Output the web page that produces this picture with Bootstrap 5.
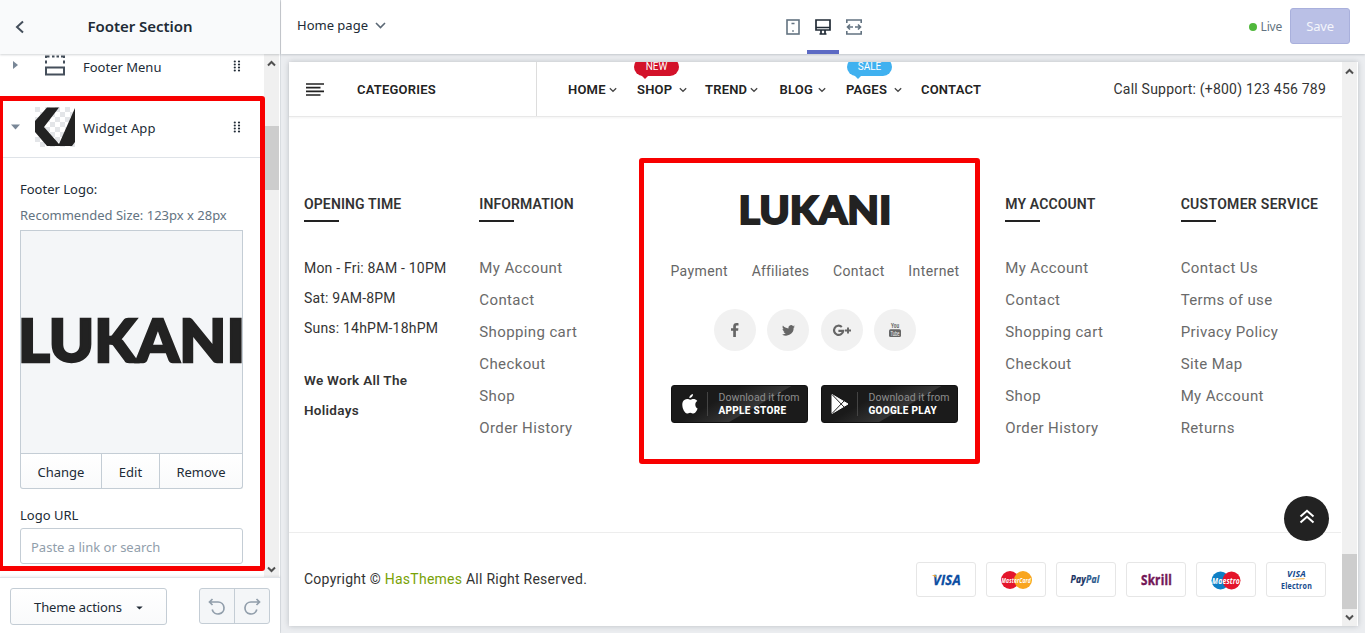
<!DOCTYPE html>
<html lang="en">
<head>
<meta charset="utf-8">
<meta name="viewport" content="width=device-width, initial-scale=1">
<title>Footer Section</title>
<link href="https://cdn.jsdelivr.net/npm/bootstrap@5.3.0/dist/css/bootstrap.min.css" rel="stylesheet">
<style>
body{height:633px;overflow:hidden;background:#ebedf0;font:13px/20px "Noto Sans","Open Sans",sans-serif;color:#212b36}
svg{display:block;flex:none;overflow:visible}
.app{height:633px}
.side{width:281px;border-right:1px solid #d9dde1;background:#fff}
.side-head{height:54px;background:#f9fafb;box-shadow:0 1px 2px rgba(33,43,54,.2);padding-left:15px;z-index:2}
.side-title{font-size:15px;font-weight:600;letter-spacing:-.03px;width:210px;padding:0 0 2px 4px}
.side-body{height:523px}
.side-scroll{width:264px}
.sbar{width:15px;background:#f0f0f0;height:100%}
.sbar .thumb{background:#cdcdcd}
.row-item{height:61px;padding-left:11px}
.row-item.first{margin-top:-18px}
.row-item.active-row{border-bottom:1px solid #dfe3e8}
.row-item .tri{width:24px}
.row-item .thumbbox{width:40px;height:40px;margin-right:8px}
.row-item .label{width:150px}
.active-row .label{padding-top:2px;letter-spacing:.15px}
.fields{padding:21px 21px 0 20px}
.hint{color:#637381;margin:6px 0 5px}
.imgbox{height:224px;border:1px solid #c4cdd5;background:#f4f6f8}
.imgbtns{height:35px;border:1px solid #c4cdd5;border-top:0;border-radius:0 0 3px 3px;background:linear-gradient(#fff,#f9fafb)}
.imgbtns span{border-right:1px solid #c4cdd5;text-align:center;line-height:36px}
.imgbtns span:last-child{border:0}
.field{height:36px;border:1px solid #c4cdd5;border-radius:3px;color:#919eab;padding:9px 10px;line-height:19px}
.side-foot{height:56px;border-top:1px solid #dfe3e8;box-shadow:0 -1px 2px rgba(33,43,54,.08);padding:10px 10px 0;background:#fff}
.tbtn{width:157px;height:37px;border:1px solid #c4cdd5;border-radius:3px;background:linear-gradient(#fff,#f9fafb);padding-left:23px;letter-spacing:-.1px}
.ugroup{width:71px;height:36px;border:1px solid #c4cdd5;border-radius:3px;background:#f4f6f8}
.ugroup div{width:34px}
.ugroup div+div{border-left:1px solid #c4cdd5;width:35px}
.hl{position:absolute;border:5px solid #f80000;border-radius:3px;z-index:5;pointer-events:none}
.hl-side{left:-2px;top:96px;width:267px;height:475px}
.hl-mid{left:350px;top:96px;width:341px;height:306px}
.topbar{height:54px;background:#fff;box-shadow:0 1px 2px rgba(33,43,54,.2);padding:0 15px 0 16px;z-index:1}
.modes{gap:15px}
.modes>div{height:54px}
.modes .on{border-bottom:4px solid #5c6ac4;width:32px;padding-top:4px}
.live{color:#637381;font-size:12px;letter-spacing:-.2px}
.dot{width:8px;height:8px;border-radius:50%;background:#50b83c}
.save{width:60px;height:36px;border:1px solid #a9b0dc;border-radius:3px;background:#bac0e6;color:#f4f5fb}
.frame{margin:8px 7px 7px 8px;height:564px;width:1069px;background:#fff;box-shadow:0 0 5px rgba(60,70,80,.28);color:#333;font-family:Roboto,"Liberation Sans",sans-serif}
.page{width:1053px}
.nav-strip{height:55px;border-bottom:1px solid #e8e8e8;box-shadow:0 1px 2px rgba(0,0,0,.05);font-weight:600;color:#222;letter-spacing:.2px}
.cats{width:248px;border-right:1px solid #ddd;padding-left:17px;gap:33px;padding-top:1px}
.menu{display:grid;grid-template-columns:69px 68px 74.5px 66.5px 75px 80px;flex:1;overflow:hidden;padding:0 0 0 3px;margin-left:28px}
.menu>div{gap:3px;padding-top:1px}
.menu .wide{gap:7px}
.flag{position:absolute;left:-3px;top:-4px;width:45px;height:18px;border-radius:9px;color:#fff;font-size:10px;font-weight:400;line-height:18px;text-align:center;letter-spacing:0}
.flag::after{content:"";position:absolute;left:7px;top:17px;border:4px solid transparent;border-top-color:inherit;border-bottom:0}
.flag.new{background:#d3122a;border-color:#d3122a}
.flag.sale{background:#40b1f0;border-color:#40b1f0}
.call{font-size:14px;font-weight:400;letter-spacing:.21px;padding-right:16px;color:#333}
.cols{height:416px;border-bottom:1px solid #ededed;padding-top:77px;--bs-gutter-x:30px;margin:0;width:1052px}
.ftitle{font-size:14px;font-weight:600;line-height:20px;letter-spacing:.12px;color:#333;margin:0;white-space:nowrap}
.ftitle.svc{letter-spacing:.3px}
.ftitle::after{content:"";display:block;width:35px;height:2px;background:#222;margin-top:6px}
.hours{font-size:14px;line-height:30px;letter-spacing:.2px;color:#333;margin-top:31px}
.hours p{margin:0 0 22px}
.hours b{font-size:13.5px;letter-spacing:.28px;font-weight:600}
.flinks{font-size:15px;line-height:32px;letter-spacing:.38px;color:#6a6a6a;margin-top:30px}
.brand{height:32px}
.mid-links{font-size:14px;letter-spacing:.4px;color:#666;gap:23.7px;margin-top:35px;white-space:nowrap}
.soc{gap:11.4px;margin-top:28px}
.soc div{width:42px;height:42px;border-radius:50%;background:#f1f1f1}
.stores{gap:13px;margin:34px 0 0}
.store{width:137px;height:38px;border-radius:3px;color:#fff;background:linear-gradient(150deg,#1a1a1a 0 35%,#363636 60%,#1b1b1b 61%);line-height:13px;border:1px solid #111}
.store .ic{width:36px;height:24px;border-right:1px solid #444;margin-right:10px}
.store small{display:block;font-size:10.5px;color:#8d8d8d;letter-spacing:.05px}
.store strong{display:block;font-size:10px;letter-spacing:.3px;font-weight:800}
.bottom{height:92px;padding:0 16px 0 15px;font-size:14px;letter-spacing:.25px}
.bottom a{color:#79a206;text-decoration:none}
.pay{width:60px;height:35px;border:1px solid #e6e6e6;border-radius:3px}
.totop{position:absolute;right:29px;top:434px;width:45px;height:45px;border-radius:50%;background:#222}
</style>
</head>
<body>
<svg width="0" height="0" class="position-absolute">
  <defs>
    <symbol id="dots" viewBox="0 0 8 12"><g fill="#212b36"><circle cx="1.800" cy="1.500" r="1.100"/><circle cx="6" cy="1.500" r="1.100"/><circle cx="1.800" cy="4.500" r="1.100"/><circle cx="6" cy="4.500" r="1.100"/><circle cx="1.800" cy="7.500" r="1.100"/><circle cx="6" cy="7.500" r="1.100"/><circle cx="1.800" cy="10.500" r="1.100"/><circle cx="6" cy="10.500" r="1.100"/></g></symbol>
    <symbol id="caret" viewBox="0 0 8 6"><path d="M.8 1.200L4 4.300l3.200-3.100" fill="none" stroke="#444" stroke-width="1.200"/></symbol>
    <symbol id="up" viewBox="0 0 9 7"><path d="M1 5.500l3.500-3.500L8 5.500" fill="none" stroke="#505050" stroke-width="2"/></symbol>
    <symbol id="down" viewBox="0 0 9 7"><path d="M1 1.500L4.500 5 8 1.500" fill="none" stroke="#505050" stroke-width="2"/></symbol>
  </defs>
</svg>
<div class="app d-flex position-relative">
  <aside class="side d-flex flex-column flex-shrink-0">
    <header class="side-head d-flex align-items-center position-relative">
      <svg width="10" height="14" viewBox="0 0 10 14"><path d="M8 1.500L2 7l6 5.500" fill="none" stroke="#454f5b" stroke-width="2"/></svg>
      <div class="side-title text-center ms-2">Footer Section</div>
    </header>
    <div class="side-body d-flex overflow-hidden">
      <div class="side-scroll overflow-hidden">
        <div class="row-item first d-flex align-items-center">
          <div class="tri"><svg width="8" height="10" viewBox="0 0 8 10" style="margin-top:-3px"><path d="M2 1l5 4-5 4z" fill="#798797"/></svg></div>
          <div class="thumbbox d-flex align-items-center justify-content-center"><svg width="20" height="22" viewBox="0 0 20 22" style="margin-top:-3px"><path d="M1 4V2.500h3.500M7 2.500h2.500M11.500 2.500H14M16 2.500h3V4M1 6.500v3M19 6.500v3" fill="none" stroke="#454f5b" stroke-width="2"/><rect x="1" y="13.500" width="18" height="7" fill="none" stroke="#454f5b" stroke-width="2"/></svg></div>
          <div class="label">Footer Menu</div>
          <svg width="8" height="12" style="margin-top:-2px"><use href="#dots"/></svg>
        </div>
        <div class="row-item active-row d-flex align-items-center">
          <div class="tri"><svg width="9" height="6" viewBox="0 0 9 6"><path d="M0 .5h9L4.500 5.500z" fill="#798797"/></svg></div>
          <div class="thumbbox"><svg width="40" height="40" viewBox="0 0 40 40"><defs><pattern id="chk" width="10" height="10" patternUnits="userSpaceOnUse"><rect width="10" height="10" fill="#fff"/><path d="M0 0h5v5H0zM5 5h5v5H5z" fill="#e3e5e8"/></pattern></defs><rect width="40" height="40" fill="url(#chk)"/><path d="M12 .5h12L9 20l15 17L40 1v34l-3 4H12L0 25V14z" fill="#222"/></svg></div>
          <div class="label">Widget App</div>
          <svg width="8" height="12"><use href="#dots"/></svg>
        </div>
        <div class="fields">
          <div>Footer Logo:</div>
          <div class="hint">Recommended Size: 123px x 28px</div>
          <div class="imgbox d-flex align-items-center"><svg width="221" height="50" viewBox="0 0 221 50"><text x="-3" y="45" font-family="Lato" font-weight="900" font-size="58.500" textLength="227" lengthAdjust="spacingAndGlyphs" fill="#222" stroke="#222" stroke-width="2.400">LUKANI</text></svg></div>
          <div class="imgbtns d-flex"><span style="width:81px">Change</span><span style="width:58px">Edit</span><span class="flex-fill">Remove</span></div>
          <div style="margin:16px 0 3px">Logo URL</div>
          <div class="field">Paste a link or search</div>
        </div>
      </div>
      <div class="sbar d-flex flex-column align-items-center">
        <svg style="margin-top:5px" width="9" height="9"><use href="#up" width="9" height="9"/></svg>
        <div class="thumb w-100" style="margin-top:58px;height:64px"></div>
        <svg class="mt-auto mb-1" width="9" height="7"><use href="#down"/></svg>
      </div>
    </div>
    <footer class="side-foot d-flex justify-content-between">
      <div class="tbtn d-flex align-items-center">Theme actions<svg style="margin:3px 0 0 14px" width="7" height="4" viewBox="0 0 8 5"><path d="M0 .5h8L4 4.500z" fill="#212b36"/></svg></div>
      <div class="ugroup d-flex">
        <div class="d-flex align-items-center justify-content-center"><svg width="18" height="18" viewBox="0 0 18 18" style="margin-top:2px"><path d="M1.500 4H10a6 6 0 1 1-5.800 7.500M4.500 1L1.500 4l3 3" fill="none" stroke="#919eab" stroke-width="1.700"/></svg></div>
        <div class="d-flex align-items-center justify-content-center"><svg width="18" height="18" viewBox="0 0 18 18" style="margin-top:2px"><path d="M16.500 4H8a6 6 0 1 0 5.800 7.500M13.500 1l3 3-3 3" fill="none" stroke="#919eab" stroke-width="1.700"/></svg></div>
      </div>
    </footer>
  </aside>

  <main class="flex-grow-1 d-flex flex-column">
    <header class="topbar d-flex align-items-center justify-content-between position-relative">
      <div class="d-flex align-items-center pb-1" style="width:200px">Home page<svg style="margin-left:7px" width="11" height="7" viewBox="0 0 11 7"><path d="M1 1l4.500 4.500L10 1" fill="none" stroke="#5b6875" stroke-width="1.600"/></svg></div>
      <div class="modes d-flex ms-auto" style="margin-right:387px">
        <div class="d-flex align-items-center"><svg width="14" height="16" viewBox="0 0 14 16"><rect x="1" y="1" width="12" height="14" fill="none" stroke="#637381" stroke-width="1.600"/><path d="M5.500 4.500h3M6.200 12h1.600" stroke="#637381" stroke-width="1.400"/></svg></div>
        <div class="on d-flex align-items-center justify-content-center" style="margin:0 -8px"><svg width="16" height="16" viewBox="0 0 16 16"><path d="M1 1h14v10H1zM1 8.500h14M6 11v3.500M10 11v3.500M4.500 15h7" fill="none" stroke="#212b36" stroke-width="1.700"/></svg></div>
        <div class="d-flex align-items-center"><svg width="16" height="16" viewBox="0 0 16 16"><path d="M.8 4V1h14.400v3M.8 12v3h14.400v-3M7 8H1.500M9 8h5.500M4 5.500L1.500 8 4 10.500M12 5.500L14.500 8 12 10.500" fill="none" stroke="#637381" stroke-width="1.600"/></svg></div>
      </div>
      <div class="d-flex align-items-center live"><span class="dot me-1"></span>Live<div class="save d-flex align-items-center justify-content-center" style="font-size:13px;margin:-2px 0 0 8px">Save</div></div>
    </header>

    <div class="frame d-flex position-relative">
      <div class="page">
        <div class="nav-strip d-flex">
          <div class="cats d-flex align-items-center"><svg width="18" height="13" viewBox="0 0 18 13"><path d="M0 1h18M0 4.600h14.500M0 8.300h18M0 12h14.500" stroke="#222" stroke-width="1.700"/></svg>CATEGORIES</div>
          <div class="menu">
            <div class="d-flex align-items-center">HOME<svg width="8" height="6"><use href="#caret"/></svg></div>
            <div class="wide d-flex align-items-center position-relative"><span class="flag new">NEW</span>SHOP<svg width="8" height="6"><use href="#caret"/></svg></div>
            <div class="d-flex align-items-center">TREND<svg width="8" height="6"><use href="#caret"/></svg></div>
            <div class="d-flex align-items-center" style="gap:5px">BLOG<svg width="8" height="6"><use href="#caret"/></svg></div>
            <div class="wide d-flex align-items-center position-relative"><span class="flag sale" style="left:1px">SALE</span>PAGES<svg width="8" height="6"><use href="#caret"/></svg></div>
            <div class="d-flex align-items-center">CONTACT</div>
          </div>
          <div class="call d-flex align-items-center">Call Support: (+800) 123 456 789</div>
        </div>
        <div class="row cols">
          <div class="col-2">
            <h6 class="ftitle">OPENING TIME</h6>
            <div class="hours"><p>Mon - Fri: 8AM - 10PM<br>Sat: 9AM-8PM<br>Suns: 14hPM-18hPM</p><b>We Work All The<br>Holidays</b></div>
          </div>
          <div class="col-2">
            <h6 class="ftitle">INFORMATION</h6>
            <div class="flinks"><div>My Account</div><div>Contact</div><div>Shopping cart</div><div>Checkout</div><div>Shop</div><div>Order History</div></div>
          </div>
          <div class="col-4 d-flex flex-column align-items-center">
            <svg class="brand" width="152" viewBox="0 0 152 32"><text x="-.5" y="30.300" font-family="Lato" font-weight="900" font-size="38.500" textLength="153" lengthAdjust="spacingAndGlyphs" fill="#222" stroke="#222" stroke-width="1.800">LUKANI</text></svg>
            <div class="mid-links d-flex"><span>Payment</span><span style="letter-spacing:.15px">Affiliates</span><span>Contact</span><span>Internet</span></div>
            <div class="soc d-flex">
              <div class="d-flex align-items-center justify-content-center"><svg width="9" height="14" viewBox="0 0 9 14"><path d="M8.500.2v2.300H7.100c-1 0-1.200.5-1.200 1.200v1.500h2.500l-.3 2.500H5.900V14H3.200V7.700H1V5.200h2.200V3.300C3.200 1.200 4.500 0 6.500 0c.9 0 1.700.1 2 .2z" fill="#666"/></svg></div>
              <div class="d-flex align-items-center justify-content-center"><svg width="13" height="11" viewBox="0 0 24 20"><path d="M24 2.400c-.9.400-1.800.6-2.800.8 1-.6 1.800-1.600 2.200-2.700-1 .6-2 1-3.100 1.200A4.900 4.900 0 0 0 11.900 6.200C7.700 6 4.100 4 1.700.900 .4 3.200 1 6 3.200 7.500c-.8 0-1.600-.2-2.200-.6 0 2.300 1.600 4.400 3.900 4.900-.7.200-1.500.2-2.200.1.600 2 2.400 3.400 4.600 3.400A9.900 9.900 0 0 1 0 17.300 14 14 0 0 0 21.500 4.900c1-.7 1.800-1.500 2.500-2.500z" fill="#666"/></svg></div>
              <div class="d-flex align-items-center justify-content-center"><svg width="19" height="13" viewBox="0 0 19 13"><path d="M9.800 3A4.600 4.600 0 1 0 11.200 6.800H6.400" fill="none" stroke="#666" stroke-width="2.200"/><path d="M13 6.500h6M16 3.500v6" stroke="#666" stroke-width="1.900"/></svg></div>
              <div class="d-flex align-items-center justify-content-center"><svg width="12" height="14" viewBox="0 0 12 14"><text x="6" y="5.200" text-anchor="middle" font-size="6.500" font-weight="700" textLength="8" lengthAdjust="spacingAndGlyphs" fill="#666">You</text><rect y="6.200" width="12" height="7.800" rx="1.500" fill="#666"/><text x="6" y="12.500" text-anchor="middle" font-size="6.500" textLength="9" lengthAdjust="spacingAndGlyphs" fill="#f1f1f1">Tube</text></svg></div>
            </div>
            <div class="stores d-flex">
              <div class="store d-flex align-items-center"><div class="ic d-flex align-items-center justify-content-center"><svg width="16" height="20" viewBox="0 0 16 20"><path d="M11 0c.2 2-1.700 4.200-3.700 4.100C7.100 2.200 9 .2 11 0zM13.300 10.500c0-2 1.100-2.900 2-3.500-1.400-1.900-3.400-2.200-4.700-1.900-1 .2-1.700.7-2.400.7-.8 0-1.700-.7-3.200-.7C2.500 5.200.3 7.200.3 10.800.3 15 3 19.500 5 19.500c1.200 0 1.700-.8 3.200-.8s1.900.8 3.200.8c1.800 0 3.500-3 4.200-5-1.300-.6-2.300-2-2.300-4z" fill="#fff"/></svg></div><div><small>Download it from</small><strong>APPLE STORE</strong></div></div>
              <div class="store d-flex align-items-center"><div class="ic d-flex align-items-center justify-content-center"><svg width="18" height="20" viewBox="0 0 18 20"><path d="M1 .5L17 10 1 19.500z" fill="#fff" stroke="#fff" stroke-linejoin="round"/><path d="M1 .5L13.500 13.500M1 19.500L13.500 6.500" stroke="#222"/></svg></div><div><small>Download it from</small><strong>GOOGLE PLAY</strong></div></div>
            </div>
          </div>
          <div class="col-2">
            <h6 class="ftitle">MY ACCOUNT</h6>
            <div class="flinks"><div>My Account</div><div>Contact</div><div>Shopping cart</div><div>Checkout</div><div>Shop</div><div>Order History</div></div>
          </div>
          <div class="col-2">
            <h6 class="ftitle svc">CUSTOMER SERVICE</h6>
            <div class="flinks"><div>Contact Us</div><div>Terms of use</div><div>Privacy Policy</div><div>Site Map</div><div>My Account</div><div>Returns</div></div>
          </div>
        </div>
        <div class="bottom d-flex align-items-center justify-content-between">
          <div>Copyright © <a href="#">HasThemes</a> All Right Reserved.</div>
          <div class="d-flex pt-1" style="gap:10px;margin-top:-3px">
            <div class="pay"><svg width="58" height="33" font-family="Open Sans" font-weight="700" font-style="italic"><text x="16" y="22" font-size="14" textLength="28" lengthAdjust="spacingAndGlyphs" fill="#0b4da2" stroke="#0b4da2" stroke-width=".3">VISA</text><path d="M14.500 12h4l1.500 4c-1-2-2.500-3-5.500-4z" fill="#f0a52c"/></svg></div>
            <div class="pay"><svg width="58" height="33"><circle cx="23" cy="17" r="9" fill="#e4152b"/><circle cx="36" cy="17" r="9" fill="#f9a51f"/><text x="14.500" y="19.500" font-family="Open Sans" font-style="italic" font-weight="700" font-size="7" textLength="29.500" lengthAdjust="spacingAndGlyphs" fill="#fff">MasterCard</text></svg></div>
            <div class="pay"><svg width="58" height="33" font-family="Open Sans" font-weight="700" font-style="italic"><text x="13.500" y="20" font-size="10" textLength="29" lengthAdjust="spacingAndGlyphs" fill="#17305f" stroke="#17305f" stroke-width=".2">Pay<tspan fill="#2a6296">Pal</tspan></text></svg></div>
            <div class="pay"><svg width="58" height="33"><text x="14" y="22" font-family="Open Sans" font-weight="700" font-size="13.500" stroke="#721657" stroke-width=".4" textLength="31" lengthAdjust="spacingAndGlyphs" fill="#721657">Skrill</text></svg></div>
            <div class="pay"><svg width="58" height="33"><circle cx="23.500" cy="17.500" r="9" fill="#0f7fc4"/><circle cx="34.500" cy="17.500" r="9" fill="#e4152b"/><text x="15" y="20.500" font-family="Open Sans" font-style="italic" font-weight="700" font-size="8.500" textLength="28" lengthAdjust="spacingAndGlyphs" fill="#fff">Maestro</text></svg></div>
            <div class="pay"><svg width="58" height="33" font-family="Open Sans" font-weight="700" fill="#164a8c"><text x="20" y="14" font-size="8.500" font-style="italic" textLength="19" lengthAdjust="spacingAndGlyphs">VISA</text><path d="M23 17.500q6-2.500 15-2.200l-1 1q-6-.5-14 1.200z" fill="#f0a52c"/><text x="14" y="25.500" font-size="8" textLength="31" lengthAdjust="spacingAndGlyphs">Electron</text></svg></div>
          </div>
        </div>
      </div>
      <div class="sbar d-flex flex-column align-items-center">
        <svg style="margin-top:5px" width="9" height="9"><use href="#up" width="9" height="9"/></svg>
        <div class="thumb w-100 mt-auto" style="height:55px"></div>
        <svg style="margin:5px 0" width="9" height="7"><use href="#down"/></svg>
      </div>
      <div class="totop d-flex align-items-center justify-content-center"><svg width="16" height="15" viewBox="0 0 16 15" style="margin-top:-5px"><path d="M1.500 7.500L8 1.800l6.500 5.700M1.500 13.500L8 7.800l6.500 5.700" fill="none" stroke="#fff" stroke-width="2"/></svg></div>
      <div class="hl hl-mid"></div>
    </div>
  </main>
  <div class="hl hl-side"></div>
</div>
<script src="https://cdn.jsdelivr.net/npm/bootstrap@5.3.0/dist/js/bootstrap.bundle.min.js"></script>
</body>
</html>
